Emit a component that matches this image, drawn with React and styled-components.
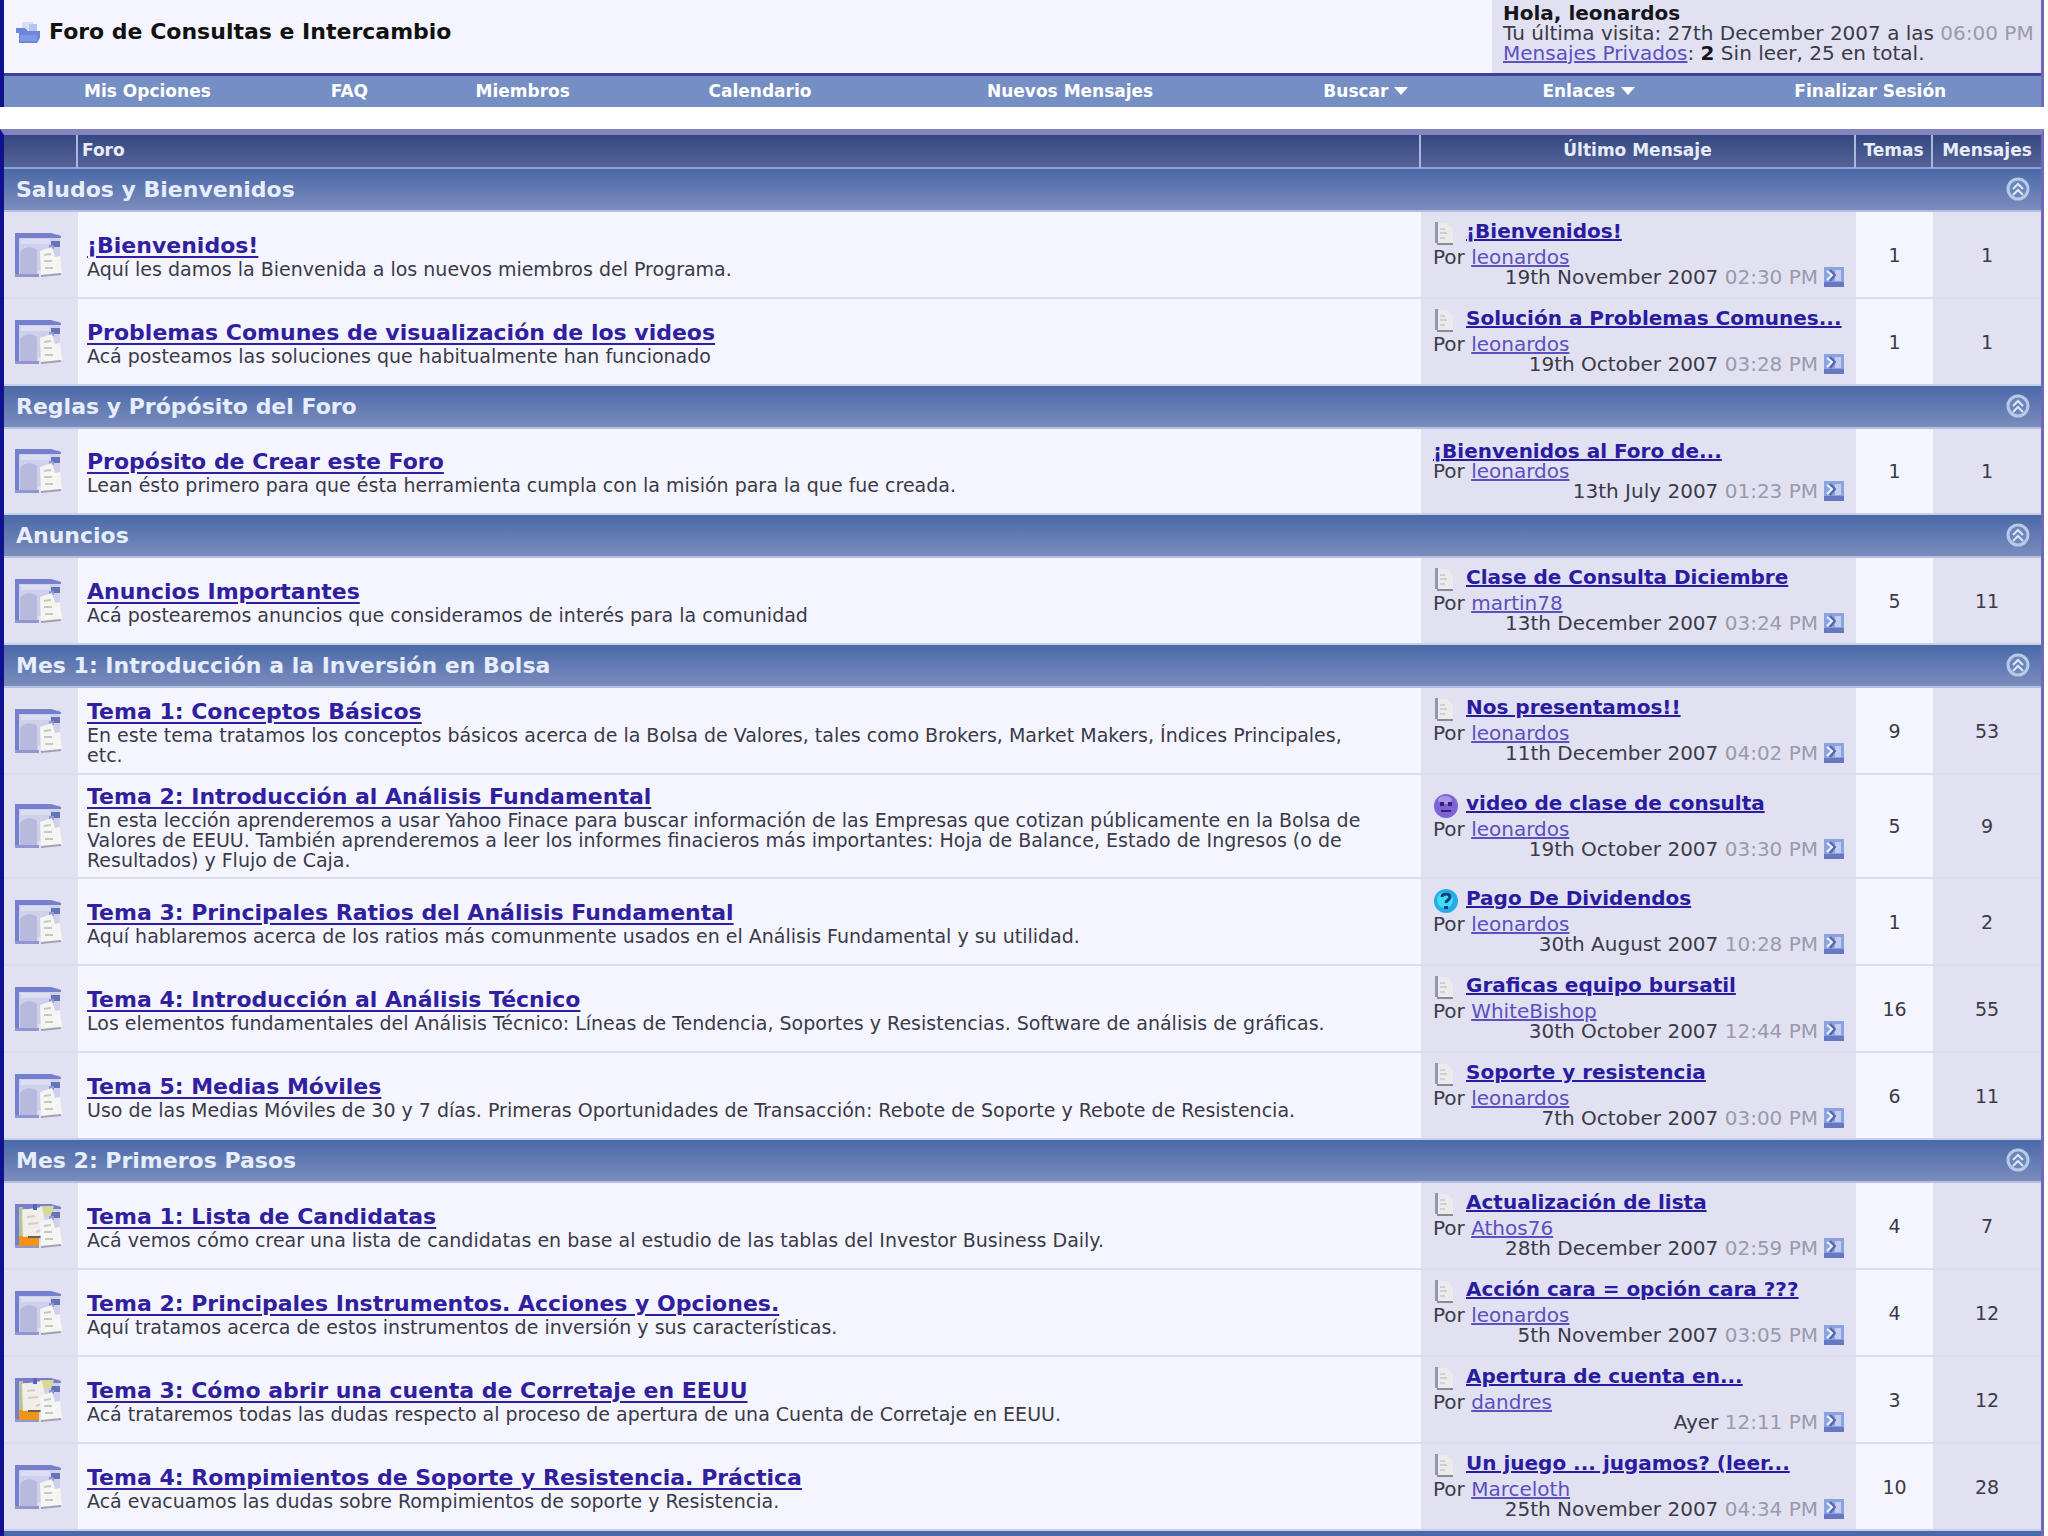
import React from 'react';
import styled, {createGlobalStyle} from 'styled-components';

const sections = [
  {
    title: 'Saludos y Bienvenidos',
    forums: [
      {
        name: '¡Bienvenidos!',
        text: 'Aquí les damos la Bienvenida a los nuevos miembros del Programa.',
        last: {icon: 'page', title: '¡Bienvenidos!', by: 'leonardos', date: '19th November 2007', time: '02:30 PM'},
        topics: 1,
        posts: 1,
      },
      {
        name: 'Problemas Comunes de visualización de los videos',
        text: 'Acá posteamos las soluciones que habitualmente han funcionado',
        last: {icon: 'page', title: 'Solución a Problemas Comunes...', by: 'leonardos', date: '19th October 2007', time: '03:28 PM'},
        topics: 1,
        posts: 1,
      },
    ],
  },
  {
    title: 'Reglas y Própósito del Foro',
    forums: [
      {
        name: 'Propósito de Crear este Foro',
        text: 'Lean ésto primero para que ésta herramienta cumpla con la misión para la que fue creada.',
        last: {title: '¡Bienvenidos al Foro de...', by: 'leonardos', date: '13th July 2007', time: '01:23 PM'},
        topics: 1,
        posts: 1,
      },
    ],
  },
  {
    title: 'Anuncios',
    forums: [
      {
        name: 'Anuncios Importantes',
        text: 'Acá postearemos anuncios que consideramos de interés para la comunidad',
        last: {icon: 'page', title: 'Clase de Consulta Diciembre', by: 'martin78', date: '13th December 2007', time: '03:24 PM'},
        topics: 5,
        posts: 11,
      },
    ],
  },
  {
    title: 'Mes 1: Introducción a la Inversión en Bolsa',
    forums: [
      {
        name: 'Tema 1: Conceptos Básicos',
        text: 'En este tema tratamos los conceptos básicos acerca de la Bolsa de Valores, tales como Brokers, Market Makers, Índices Principales, etc.',
        last: {icon: 'page', title: 'Nos presentamos!!', by: 'leonardos', date: '11th December 2007', time: '04:02 PM'},
        topics: 9,
        posts: 53,
      },
      {
        name: 'Tema 2: Introducción al Análisis Fundamental',
        text: 'En esta lección aprenderemos a usar Yahoo Finace para buscar información de las Empresas que cotizan públicamente en la Bolsa de Valores de EEUU. También aprenderemos a leer los informes finacieros más importantes: Hoja de Balance, Estado de Ingresos (o de Resultados) y Flujo de Caja.',
        last: {icon: 'face', title: 'video de clase de consulta', by: 'leonardos', date: '19th October 2007', time: '03:30 PM'},
        topics: 5,
        posts: 9,
      },
      {
        name: 'Tema 3: Principales Ratios del Análisis Fundamental',
        text: 'Aquí hablaremos acerca de los ratios más comunmente usados en el Análisis Fundamental y su utilidad.',
        last: {icon: 'question', title: 'Pago De Dividendos', by: 'leonardos', date: '30th August 2007', time: '10:28 PM'},
        topics: 1,
        posts: 2,
      },
      {
        name: 'Tema 4: Introducción al Análisis Técnico',
        text: 'Los elementos fundamentales del Análisis Técnico: Líneas de Tendencia, Soportes y Resistencias. Software de análisis de gráficas.',
        last: {icon: 'page', title: 'Graficas equipo bursatil', by: 'WhiteBishop', date: '30th October 2007', time: '12:44 PM'},
        topics: 16,
        posts: 55,
      },
      {
        name: 'Tema 5: Medias Móviles',
        text: 'Uso de las Medias Móviles de 30 y 7 días. Primeras Oportunidades de Transacción: Rebote de Soporte y Rebote de Resistencia.',
        last: {icon: 'page', title: 'Soporte y resistencia', by: 'leonardos', date: '7th October 2007', time: '03:00 PM'},
        topics: 6,
        posts: 11,
      },
    ],
  },
  {
    title: 'Mes 2: Primeros Pasos',
    forums: [
      {
        name: 'Tema 1: Lista de Candidatas',
        text: 'Acá vemos cómo crear una lista de candidatas en base al estudio de las tablas del Investor Business Daily.',
        isNew: true,
        last: {icon: 'page', title: 'Actualización de lista', by: 'Athos76', date: '28th December 2007', time: '02:59 PM'},
        topics: 4,
        posts: 7,
      },
      {
        name: 'Tema 2: Principales Instrumentos. Acciones y Opciones.',
        text: 'Aquí tratamos acerca de estos instrumentos de inversión y sus características.',
        last: {icon: 'page', title: 'Acción cara = opción cara ???', by: 'leonardos', date: '5th November 2007', time: '03:05 PM'},
        topics: 4,
        posts: 12,
      },
      {
        name: 'Tema 3: Cómo abrir una cuenta de Corretaje en EEUU',
        text: 'Acá trataremos todas las dudas respecto al proceso de apertura de una Cuenta de Corretaje en EEUU.',
        isNew: true,
        last: {icon: 'page', title: 'Apertura de cuenta en...', by: 'dandres', date: 'Ayer', time: '12:11 PM'},
        topics: 3,
        posts: 12,
      },
      {
        name: 'Tema 4: Rompimientos de Soporte y Resistencia. Práctica',
        text: 'Acá evacuamos las dudas sobre Rompimientos de soporte y Resistencia.',
        last: {icon: 'page', title: 'Un juego ... jugamos? (leer...', by: 'Marceloth', date: '25th November 2007', time: '04:34 PM'},
        topics: 10,
        posts: 28,
      },
    ],
  },
];

const menu = [
  {label: 'Mis Opciones'},
  {label: 'FAQ'},
  {label: 'Miembros'},
  {label: 'Calendario'},
  {label: 'Nuevos Mensajes'},
  {label: 'Buscar', arrow: true},
  {label: 'Enlaces', arrow: true},
  {label: 'Finalizar Sesión'},
];

function ForumIcon({isNew}) {
  return (
    <svg width="50" height="46" viewBox="0 0 50 46">
      <path d="M2 2h44v36H24v7H2z" fill="#cfd1ec" />
      <path d="M6 20c4-6 12-6 17-2v25H6z" fill="#b9b9de" />
      <path d="M1 1h36l10 3v2H5v39H1z" fill="#7480cd" />
      <path d="M1 42h24v3H1z" fill="#8f96d0" />
      <path d="M7 7h29v5H7z" fill="#dcdef2" />
      <path d="M37 9h9v6h-9z" fill="#6673b8" />
      <path d="M35 13h5v4h-5z" fill="#8f9cd0" />
      {isNew && (
        <>
          <path d="M5 4h4v31H5z" fill="#b9c39c" />
          <path d="M5 33h20v10H5z" fill="#ef9418" />
          <path d="M26 3h14l-3 9H26z" fill="#d6d894" />
          <path d="M8 7l20-3 5 24-8 5-16 1z" fill="#f1eeea" />
          <path d="M19 1h4v6h-4z" fill="#5c62b4" />
          <path d="M13 14l8-1M14 21l10-1M22 29l6-2" stroke="#cfccd2" strokeWidth="2" />
          <path d="M14 34h13" stroke="#6d5f50" strokeWidth="2" />
        </>
      )}
      <path d="M26 19l12-4 3 10 5-1 2 17-21 3z" fill="#f5f5f4" />
      <path d="M30 23l7-1M30 29h8M31 36h8" stroke="#c6c7be" strokeWidth="2" />
      <path d="M27 44l20-2" stroke="#9fa2b4" strokeWidth="2" />
    </svg>
  );
}

function PageIcon() {
  return (
    <svg width="26" height="26" viewBox="0 0 26 26">
      <path d="M4 2h10l6 6v14H4z" fill="#ebebee" />
      <path d="M7 8h5M7 12h7M7 17h5" stroke="#cfcfd4" strokeWidth="2" />
      <path d="M2 1h3v21H2z" fill="#9696a6" />
      <path d="M4 22h16v2H4z" fill="#8a8a94" />
    </svg>
  );
}

function FaceIcon() {
  return (
    <svg width="26" height="26" viewBox="0 0 26 26">
      <circle cx="13" cy="13" r="12" fill="#7d62d8" />
      <ellipse cx="12" cy="7" rx="7" ry="4" fill="#a596e8" />
      <path d="M7 9h4v4H7zM15 9h4v4h-4z" fill="#32246e" />
      <path d="M8 18h10" stroke="#32246e" strokeWidth="2" />
    </svg>
  );
}

function QuestionIcon() {
  return (
    <svg width="26" height="26" viewBox="0 0 26 26">
      <circle cx="13" cy="13" r="12" fill="#25aee6" />
      <circle cx="12" cy="12" r="8" fill="#3fdcf6" />
      <path d="M9 9c0-4 8-4 8 0 0 3-4 3-4 6" fill="none" stroke="#123f7a" strokeWidth="3" />
      <path d="M11 18h4v3h-4z" fill="#123f7a" />
    </svg>
  );
}

function LastPostIcon() {
  return (
    <svg width="20" height="20" viewBox="0 0 20 20">
      <rect width="20" height="20" fill="#8ba3de" />
      <path d="M0 15h20v5H0z" fill="#6878c0" />
      <path d="M11 3h6v11h-6z" fill="#c3cdf0" />
      <path d="M3 4l5 4-5 5" fill="none" stroke="#eef2fd" strokeWidth="2" />
      <path d="M6 3l5 5-5 6" fill="none" stroke="#5565b0" strokeWidth="2" />
    </svg>
  );
}

function CollapseIcon() {
  return (
    <svg width="25" height="25" viewBox="0 0 25 25">
      <circle cx="12" cy="12" r="10" fill="#6d86bc" stroke="#b7cbe8" strokeWidth="3" />
      <path d="M7 12l5-5 5 5M7 18l5-5 5 5" fill="none" stroke="#dfe8f8" strokeWidth="2" />
    </svg>
  );
}

function FolderIcon() {
  return (
    <svg width="24" height="24" viewBox="0 0 24 24">
      <path d="M6 2h11v8H6z" fill="#d5dff6" />
      <path d="M13 4h8v8h-8z" fill="#b4c5ee" />
      <path d="M0 8h9l3 3h12v7l-3 5H3V13H0z" fill="#6d85dc" />
      <path d="M4 15h17v6H4z" fill="#7f98e8" />
    </svg>
  );
}

const icons = {page: PageIcon, face: FaceIcon, question: QuestionIcon};

function LastPost({post}) {
  const Icon = icons[post.icon];
  return (
    <>
      <PostTitle>
        {Icon && <Icon />}
        <PostLink href="#">{post.title}</PostLink>
      </PostTitle>
      <div>
        Por <Link href="#">{post.by}</Link>
      </div>
      <PostDate>
        <span>
          {post.date} <Time>{post.time}</Time>
        </span>
        <IconLink href="#" aria-label="Ir al último mensaje">
          <LastPostIcon />
        </IconLink>
      </PostDate>
    </>
  );
}

function App() {
  return (
    <Page>
      <GlobalStyle />
      <Top>
        <Header>
          <Brand>
            <FolderIcon />
            Foro de Consultas e Intercambio
          </Brand>
          <UserBox>
            <strong>Hola, leonardos</strong>
            <br />
            Tu última visita: 27th December 2007 a las <Time>06:00 PM</Time>
            <br />
            <Link href="#">Mensajes Privados</Link>: <strong>2</strong> Sin leer, 25 en total.
          </UserBox>
        </Header>
        <Nav>
          {menu.map(item => (
            <NavLink href="#" key={item.label}>
              {item.label}
              {item.arrow && (
                <svg width="14" height="10" viewBox="0 0 14 10">
                  <path d="M0 1h14L7 9z" fill="#fff" />
                </svg>
              )}
            </NavLink>
          ))}
        </Nav>
      </Top>
      <Board>
        <colgroup>
          <Col $width={74} />
          <col />
          <Col $width={435} />
          <Col $width={77} />
          <Col $width={108} />
        </colgroup>
        <thead>
          <tr>
            <HeadCell aria-label="Estado" />
            <HeadCell $left>Foro</HeadCell>
            <HeadCell>Último Mensaje</HeadCell>
            <HeadCell>Temas</HeadCell>
            <HeadCell>Mensajes</HeadCell>
          </tr>
        </thead>
        {sections.map(section => (
          <tbody key={section.title}>
            <tr>
              <Category colSpan={5}>
                <CategoryBar>
                  {section.title}
                  <CollapseButton aria-label="Contraer">
                    <CollapseIcon />
                  </CollapseButton>
                </CategoryBar>
              </Category>
            </tr>
            {section.forums.map(forum => (
              <Row key={forum.name}>
                <IconCell>
                  <ForumIcon isNew={forum.isNew} />
                </IconCell>
                <ForumCell>
                  <ForumLink href="#">{forum.name}</ForumLink>
                  <ForumText>{forum.text}</ForumText>
                </ForumCell>
                <LastCell>
                  <LastPost post={forum.last} />
                </LastCell>
                <CountCell>{forum.topics}</CountCell>
                <CountCell $dark>{forum.posts}</CountCell>
              </Row>
            ))}
          </tbody>
        ))}
      </Board>
      <BoardEnd />
    </Page>
  );
}

const GlobalStyle = createGlobalStyle`
  * {
    box-sizing: border-box;
  }
  body {
    margin: 0;
    background: #fff;
    color: #3a3a48;
    font: 20px/20px Verdana, 'DejaVu Sans', sans-serif;
  }
  svg {
    display: block;
    flex: none;
  }
`;
const Page = styled.div`
  padding-right: 4px;
`;
const Top = styled.header`
  border-left: 4px solid #11118f;
  border-right: 3px solid #7168bb;
`;
const Header = styled.div`
  display: flex;
  justify-content: space-between;
  height: 73px;
  background: #f5f5ff;
`;
const Brand = styled.div`
  display: flex;
  align-items: center;
  gap: 9px;
  padding: 0 0 9px 12px;
  color: #111;
  font-size: 22px;
  font-weight: bold;
`;
const UserBox = styled.div`
  width: 549px;
  padding: 3px 0 0 11px;
  background: #e1e1f2;
  white-space: nowrap;
  strong {
    color: #15151c;
  }
`;
const Time = styled.span`
  color: #9a9aac;
`;
const Link = styled.a`
  color: #5a50c0;
  text-decoration: underline;
`;
const Nav = styled.nav`
  display: grid;
  grid-template-columns: 214fr 96fr 170fr 194fr 282fr 172fr 170fr 262fr;
  height: 34px;
  padding: 0 0 2px 4px;
  border-top: 3px solid #4040a4;
  background: #758ec4;
`;
const NavLink = styled.a`
  display: flex;
  align-items: center;
  justify-content: center;
  gap: 6px;
  color: #fff;
  font-size: 17px;
  font-weight: bold;
  text-decoration: none;
`;
const Board = styled.table`
  width: 100%;
  margin-top: 22px;
  border: solid #11118f;
  border-width: 6px 3px 0 4px;
  border-top-color: #8583c0;
  border-right-color: #7168bb;
  border-spacing: 0;
  table-layout: fixed;
`;
const Col = styled.col`
  width: ${props => props.$width}px;
`;
const HeadCell = styled.th`
  height: 34px;
  padding: 0 4px 2px;
  border-right: 2px solid #a9b8dc;
  border-bottom: 2px solid #8fa3d2;
  background: linear-gradient(#34487f, #55639a);
  color: #e8ecf8;
  font-size: 17px;
  text-align: ${props => (props.$left ? 'left' : 'center')};
  white-space: nowrap;
  &:last-child {
    border-right: 0;
  }
`;
const Category = styled.td`
  height: 43px;
  padding: 0;
  border-bottom: 2px solid #b4c0e0;
  background: linear-gradient(#4a69a8, #7b8cbd);
`;
const CategoryBar = styled.div`
  display: flex;
  align-items: center;
  justify-content: space-between;
  padding: 0 10px 0 12px;
  color: #e6edfb;
  font-size: 22px;
  font-weight: bold;
`;
const CollapseButton = styled.button`
  padding: 0;
  border: 0;
  background: none;
`;
const Row = styled.tr`
  td {
    height: 86px;
    border-bottom: 2px solid #dcdcea;
    vertical-align: middle;
  }
  &:last-child td {
    border-bottom-color: #c6d0ea;
  }
`;
const IconCell = styled.td`
  padding: 0 10px;
  background: #e1e1f2;
`;
const ForumCell = styled.td`
  padding: 9px 9px 7px;
  background: #f5f5ff;
`;
const ForumLink = styled.a`
  color: #3020a0;
  font-size: 22px;
  font-weight: bold;
  line-height: 26px;
  text-decoration: underline;
  text-decoration-thickness: 2px;
  text-underline-offset: 3px;
`;
const ForumText = styled.div`
  padding-right: 40px;
  font-size: 19px;
`;
const LastCell = styled.td`
  padding: 9px 12px 10px;
  background: #e1e1f2;
  white-space: nowrap;
`;
const PostTitle = styled.div`
  display: flex;
  align-items: flex-start;
  gap: 7px;
`;
const PostLink = styled.a`
  color: #2a1ca0;
  font-weight: bold;
  text-decoration: underline;
`;
const PostDate = styled.div`
  display: flex;
  align-items: center;
  justify-content: flex-end;
  gap: 6px;
`;
const IconLink = styled.a`
  display: block;
`;
const CountCell = styled.td`
  background: ${props => (props.$dark ? '#e1e1f2' : '#f5f5ff')};
  font-size: 19px;
  text-align: center;
`;
const BoardEnd = styled.div`
  height: 7px;
  border-left: 4px solid #11118f;
  border-right: 3px solid #7168bb;
  background: #4a69a8;
`;

export default App;
